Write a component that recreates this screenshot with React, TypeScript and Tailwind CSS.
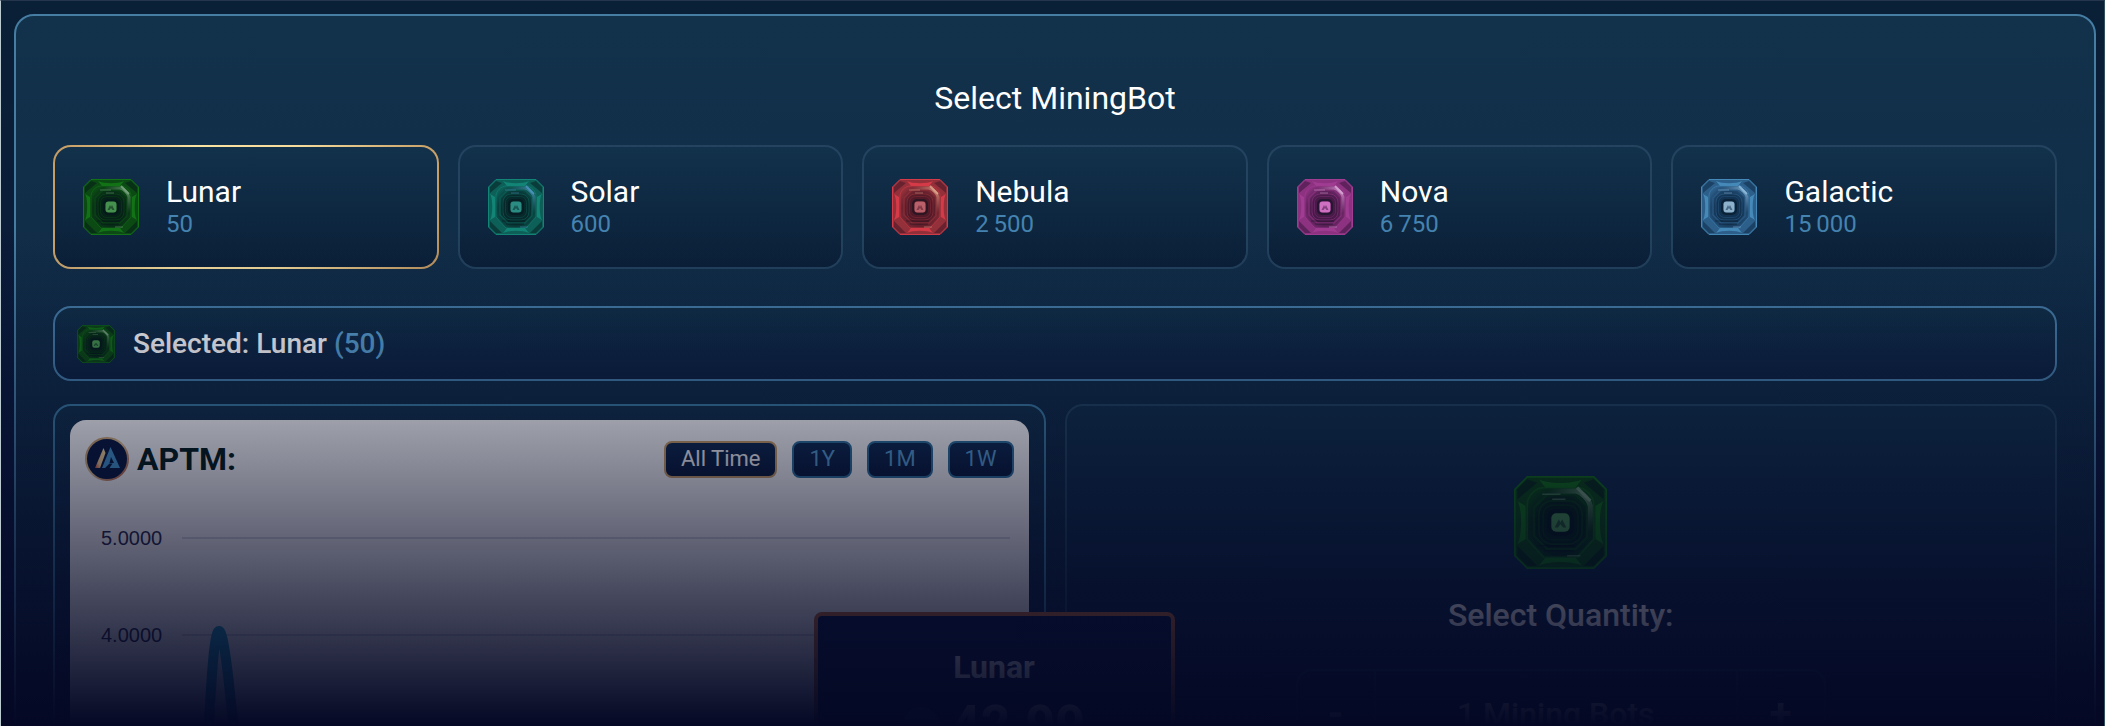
import React, { useId, useState } from "react";
import clsx from "clsx";

type Bot = {
  name: string;
  price: string;
  colors: GemColors;
};

type GemColors = {
  rim: string;
  mid: string;
  dark: string;
  core: string;
  shine: string;
};

const bots: Bot[] = [
  {
    name: "Lunar",
    price: "50",
    colors: { rim: "#127316", mid: "#0c4a14", dark: "#062218", core: "#46914e", shine: "#7ba680" },
  },
  {
    name: "Solar",
    price: "600",
    colors: { rim: "#128577", mid: "#0d6058", dark: "#07292b", core: "#2a8c82", shine: "#4d93bd" },
  },
  {
    name: "Nebula",
    price: "2\u2009500",
    colors: { rim: "#d43a47", mid: "#93303a", dark: "#521a28", core: "#b9606a", shine: "#dfa48a" },
  },
  {
    name: "Nova",
    price: "6\u2009750",
    colors: { rim: "#a03c92", mid: "#8d3280", dark: "#471a48", core: "#d070c2", shine: "#dba6d8" },
  },
  {
    name: "Galactic",
    price: "15\u2009000",
    colors: { rim: "#4489b8", mid: "#2d5f8b", dark: "#123251", core: "#8fb2cc", shine: "#8fbbdc" },
  },
];

const ranges = ["All Time", "1Y", "1M", "1W"];

function Gem({ colors, className }: { colors: GemColors; className: string }) {
  const id = useId();
  return (
    <svg viewBox="0 0 56 56" className={className} aria-hidden="true">
      <defs>
        <radialGradient id={`${id}body`} cx="0.5" cy="0.55" r="0.6">
          <stop offset="0.55" stopColor={colors.dark} />
          <stop offset="1" stopColor={colors.mid} />
        </radialGradient>
        <linearGradient id={`${id}shine`} x1="0" y1="0" x2="1" y2="1">
          <stop offset="0" stopColor={colors.shine} stopOpacity="0" />
          <stop offset="0.5" stopColor={colors.shine} />
          <stop offset="1" stopColor={colors.shine} stopOpacity="0" />
        </linearGradient>
      </defs>
      <path d="M8 .5h40l7.500 7.500v40l-7.500 7.500H8L.5 48V8z" fill={colors.mid} stroke={colors.rim} />
      <path d="M8 2 2 8v6L14 4zM48 2l6 6v6L42 4zM2 42v6l6 6h6zM54 42v6l-6 6h-6z" fill={colors.dark} opacity=".65" />
      <path d="M2 15c3 4 3 22 0 26l5-3V18zM54 15c-3 4-3 22 0 26l-5-3V18zM15 2c6 3 20 3 26 0l-4 5H19zM15 54c6-3 20-3 26 0l-4-5H19z" fill={colors.rim} />
      <path
        d="M18 7h20c5 0 10 5 10 10v21L38 49H18L8 38V17C8 12 13 7 18 7z"
        fill={`url(#${id}body)`}
        stroke={colors.rim}
        strokeOpacity=".55"
      />
      <path
        d="M20 11h17l7 7v19l-7 7H20l-8-8V19z"
        fill="none"
        stroke={colors.mid}
        strokeWidth="1.500"
        opacity=".7"
      />
      <rect x="15" y="15" width="26" height="26" rx="8" fill="none" stroke={colors.mid} opacity=".6" />
      <rect x="17.500" y="17.500" width="21" height="21" rx="6" fill="none" stroke={colors.mid} opacity=".4" />
      <path
        d="M20 9h17c4 1 8 5 9 9v16"
        fill="none"
        stroke={`url(#${id}shine)`}
        strokeWidth="3"
        opacity=".7"
      />
      <path d="m38 7 8 8" stroke={colors.shine} strokeWidth="2" opacity=".85" />
      <path d="M17 11h11M23 14h8M32 48h8" stroke={colors.shine} opacity=".5" />
      <path d="M14 42h23M18 45h18" stroke="#041018" opacity=".4" />
      <rect x="21" y="21" width="14" height="14" rx="4" fill={colors.dark} stroke="#04121c" strokeOpacity=".5" strokeWidth="2" />
      <rect x="22.500" y="22.500" width="11" height="11" rx="3" fill={colors.core} />
      <path d="m24.500 31 2.500-5 1 2 1-2 2.500 5h-2l-1.500-2-1.500 2z" fill={colors.dark} opacity=".55" />
    </svg>
  );
}

function AptmLogo() {
  return (
    <svg viewBox="0 0 44 44" className="size-11" aria-hidden="true">
      <defs>
        <linearGradient id="aptm-ring" x1="0" y1="0" x2="1" y2="1">
          <stop offset="0" stopColor="#c79a62" />
          <stop offset="0.5" stopColor="#e6c690" />
          <stop offset="1" stopColor="#b4583c" />
        </linearGradient>
        <linearGradient id="aptm-slash" x1="1" y1="0" x2="0" y2="1">
          <stop offset="0" stopColor="#fbe0a0" />
          <stop offset="0.7" stopColor="#f0c98c" />
          <stop offset="1" stopColor="#c8503c" />
        </linearGradient>
      </defs>
      <circle cx="22" cy="22" r="21" fill="#0a1a40" stroke="url(#aptm-ring)" strokeWidth="2" />
      <path d="M18.500 11 20.500 16 15 31h-5z" fill="url(#aptm-slash)" />
      <path d="M25.500 10 35 31H24.500l3-4.500h-3L20 31h-3z" fill="#4699cf" />
      <path d="m26 20 3 6h-4.500z" fill="#0a1a40" />
    </svg>
  );
}

function BotCard({ bot, active, onSelect }: { bot: Bot; active: boolean; onSelect: () => void }) {
  return (
    <button
      type="button"
      aria-pressed={active}
      onClick={onSelect}
      className={clsx(
        "rounded-[18px] p-0.5 text-left",
        active
          ? "bg-[linear-gradient(100deg,#c39a62,#fbe3a2_35%,#f6dc9c_60%,#c0965f)]"
          : "bg-[#23435f]"
      )}
    >
      <span className="flex h-[120px] items-center gap-[27px] rounded-2xl bg-linear-to-b from-[#12314b] to-[#0b2039] px-7">
        <Gem colors={bot.colors} className="size-14 shrink-0" />
        <span className="flex flex-col pt-0.5">
          <span className="text-[30px] leading-8 text-white">{bot.name}</span>
          <span className="text-2xl leading-8 text-[#4583b0]">{bot.price}</span>
        </span>
      </span>
    </button>
  );
}

function PriceChart() {
  const [range, setRange] = useState("All Time");

  return (
    <div className="rounded-2xl bg-white px-[15px] pt-4 pb-[200px]">
      {/* Chart header */}
      <div className="flex h-[46px] items-center justify-between">
        <div className="flex items-center gap-2">
          <AptmLogo />
          <h2 className="text-[32px] leading-9 font-bold text-[#04201c]">APTM:</h2>
        </div>
        <div className="flex gap-[15px]">
          {ranges.map((item) => (
            <button
              key={item}
              type="button"
              onClick={() => setRange(item)}
              className={clsx(
                "h-[37px] rounded-lg border-2 bg-linear-to-b from-[#0f2c50] to-[#0b1a3c] px-[15px] text-[22px] leading-8",
                item === range ? "border-[#d0a468] text-white" : "border-[#2f74a0] text-[#5ba3d6]"
              )}
            >
              {item}
            </button>
          ))}
        </div>
      </div>

      {/* Plot */}
      <div className="relative mt-[41px] flex flex-col gap-[67px] pr-1 pl-4 font-['Liberation_Sans',sans-serif] text-xl leading-[30px] text-[#2c2c4c]">
        {["5.0000", "4.0000"].map((tick) => (
          <div key={tick} className="flex items-center gap-5">
            <span>{tick}</span>
            <span className="h-0.5 grow bg-[#dadae2]" />
          </div>
        ))}
        <svg viewBox="0 0 60 140" className="absolute top-[98px] left-[104px] h-[140px] w-[60px]" aria-hidden="true">
          <path
            d="M18 140C22 60 25 10 30 10s10 50 18 130"
            fill="#d5e6f2"
            stroke="#23a4c6"
            strokeWidth="10"
          />
        </svg>
      </div>
    </div>
  );
}

export default function App() {
  const [selected, setSelected] = useState(0);
  const [quantity, setQuantity] = useState(1);
  const bot = bots[selected];

  return (
    <div className="relative h-screen overflow-hidden border-t border-r border-l border-t-[#25364c] border-r-[#33505f] border-l-[#bccad2] bg-linear-to-b from-[#0a2036] to-[#0c1440] font-[Roboto,sans-serif]">
      <main className="mt-[13px] mr-2 ml-[13px] rounded-[20px] border-2 border-[#457da3] bg-linear-to-b from-[#12314b] to-[#0d2440] px-[37px] pt-[62px] pb-10">
        <h1 className="text-center text-[32px] leading-10 text-white">Select MiningBot</h1>

        {/* Bots */}
        <div className="mt-[27px] grid grid-cols-5 gap-[19px]">
          {bots.map((item, i) => (
            <BotCard
              key={item.name}
              bot={item}
              active={i === selected}
              onSelect={() => setSelected(i)}
            />
          ))}
        </div>

        {/* Current selection */}
        <div className="mt-[37px] flex h-[75px] items-center gap-[18px] rounded-[18px] border-2 border-[#457da8] bg-linear-to-b from-[#113049] to-[#0d2242] px-[22px]">
          <Gem colors={bot.colors} className="size-[38px]" />
          <p className="text-[28px] leading-9 font-medium text-white">
            Selected: {bot.name} <span className="text-[#5aa0d0]">({bot.price})</span>
          </p>
        </div>

        <div className="mt-[23px] grid grid-cols-2 gap-[19px]">
          <div className="relative rounded-[18px] border-2 border-[#3b7ca3] bg-linear-to-b from-[#12314b] to-[#0c1c40] p-[15px] pt-3.5">
            <PriceChart />

            {/* Price popup */}
            <div className="absolute top-[206px] -right-[131px] flex w-[361px] flex-col items-center rounded-lg border-4 border-[#c9703c] bg-[#0c1e48] pt-[31px] pb-6 text-white">
              <p className="text-[32px] leading-10 font-bold">{bot.name}</p>
              <p className="mt-2 flex items-center gap-3 text-[52px] leading-[60px] font-bold">
                <span className="size-9 rounded-full bg-[#2a6488]" />
                42.99
              </p>
            </div>
          </div>

          <div className="flex flex-col items-center rounded-[18px] border-2 border-[#22455f] bg-linear-to-b from-[#11304a] to-[#0b1c44] pt-[70px]">
            <Gem colors={bot.colors} className="size-[93px]" />
            <h2 className="mt-[26px] text-[32px] leading-10 font-medium text-white">
              Select Quantity:
            </h2>
            <div className="mt-[34px] flex h-[90px] w-[530px] rounded-2xl border-2 border-[#173a5a] text-[32px] font-medium text-white">
              <button
                type="button"
                aria-label="Less"
                onClick={() => setQuantity(Math.max(1, quantity - 1))}
                className="w-[78px] border-r-2 border-[#173a5a] text-[40px] font-bold"
              >
                -
              </button>
              <span className="flex grow items-center justify-center">
                {quantity} Mining Bots
              </span>
              <button
                type="button"
                aria-label="More"
                onClick={() => setQuantity(quantity + 1)}
                className="w-[88px] border-l-2 border-[#173a5a] text-[40px] font-bold"
              >
                +
              </button>
            </div>
          </div>
        </div>
      </main>

      {/* Fade towards the bottom of the preview */}
      <div className="pointer-events-none absolute inset-x-0 bottom-0 h-[500px] bg-linear-to-b from-[#040824]/0 to-[#040824]" />
    </div>
  );
}
